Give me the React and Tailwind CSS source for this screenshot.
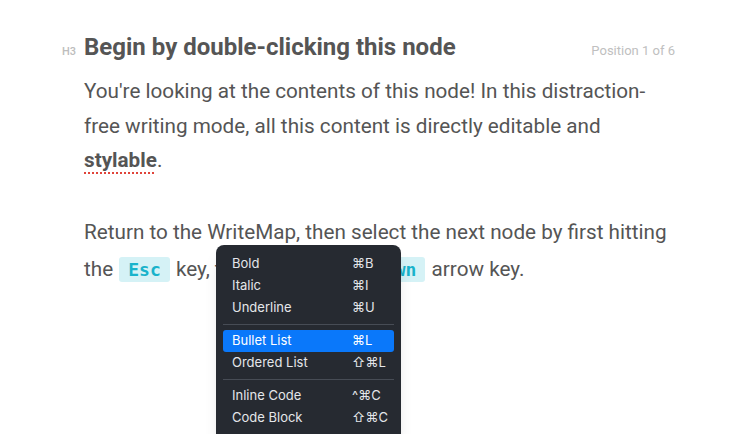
import { useState } from 'react'

const menuGroups = [
  [
    { label: 'Bold', key: '⌘B' },
    { label: 'Italic', key: '⌘I' },
    { label: 'Underline', key: '⌘U' },
  ],
  [
    { label: 'Bullet List', key: '⌘L', active: true },
    { label: 'Ordered List', key: '⇧⌘L' },
  ],
  [
    { label: 'Inline Code', key: '^⌘C' },
    { label: 'Code Block', key: '⇧⌘C' },
  ],
]

function Code({ children, className = 'mx-[1px]' }) {
  return (
    <code className={`${className} rounded-[3px] bg-[#d5f2f6] px-[9px] py-[2px] font-['DejaVu_Sans_Mono',monospace] text-[18px] font-bold text-[#19b3cb]`}>
      {children}
    </code>
  )
}

function FormatMenu() {
  return (
    <div className="absolute left-[216px] top-[245px] w-[185px] rounded-t-[8px] bg-[#262a31] px-[7px] pt-[8px] pb-[6px] font-['Inter',sans-serif] text-[13px] text-[#e4e6ea] shadow-lg">
      {menuGroups.map((group, gi) => (
        <div key={gi}>
          {gi > 0 && <div className="my-[5px] h-px bg-[#474c55]" />}
          {group.map(item => (
            <div
              key={item.label}
              className={`flex h-[22px] items-center justify-between rounded-[3px] pl-[9px] pr-[12px] ${item.active ? 'bg-[#0a78fa] text-white' : ''}`}
            >
              <span>{item.label}</span>
              <span className="w-[30px] text-left">{item.key}</span>
            </div>
          ))}
        </div>
      ))}
      <div className="mt-[5px] h-px bg-[#474c55]" />
    </div>
  )
}

export default function App() {
  const [pos] = useState({ current: 1, total: 6 })

  return (
    <div className="relative h-[434px] w-[750px] overflow-hidden bg-white font-['Roboto',sans-serif] text-[#555555]">
      <div className="pl-[62px] pr-[75px] pt-[31px]">
        {/* heading row */}
        <div className="flex items-baseline">
          <span className="w-[22px] text-[11px] font-medium text-[#bdbdbd]">H3</span>
          <h3 className="text-[24px] font-bold leading-[32px] text-[#555555]">Begin by double-clicking this node</h3>
          <span className="ml-auto text-[13px] text-[#c0c0c0]">Position {pos.current} of {pos.total}</span>
        </div>

        {/* body */}
        <div className="pl-[22px] pt-[11px] text-[20.7px] leading-[34.5px]">
          <p>
            You're looking at the contents of this node! In this distraction-free writing mode, all this content is directly editable and{' '}
            <strong className="font-bold underline decoration-[#e0443a] decoration-dotted decoration-[1.5px] underline-offset-[5px]">stylable</strong>.
          </p>
          <p className="mt-[36px] leading-[37px]">
            Return to the WriteMap, then select the next node by first hitting the <Code>Esc</Code> key, then the{' '}
            <Code className="ml-[15px] mr-[1px]">ArrowDown</Code> arrow key.
          </p>
        </div>
      </div>

      <FormatMenu />
    </div>
  )
}
